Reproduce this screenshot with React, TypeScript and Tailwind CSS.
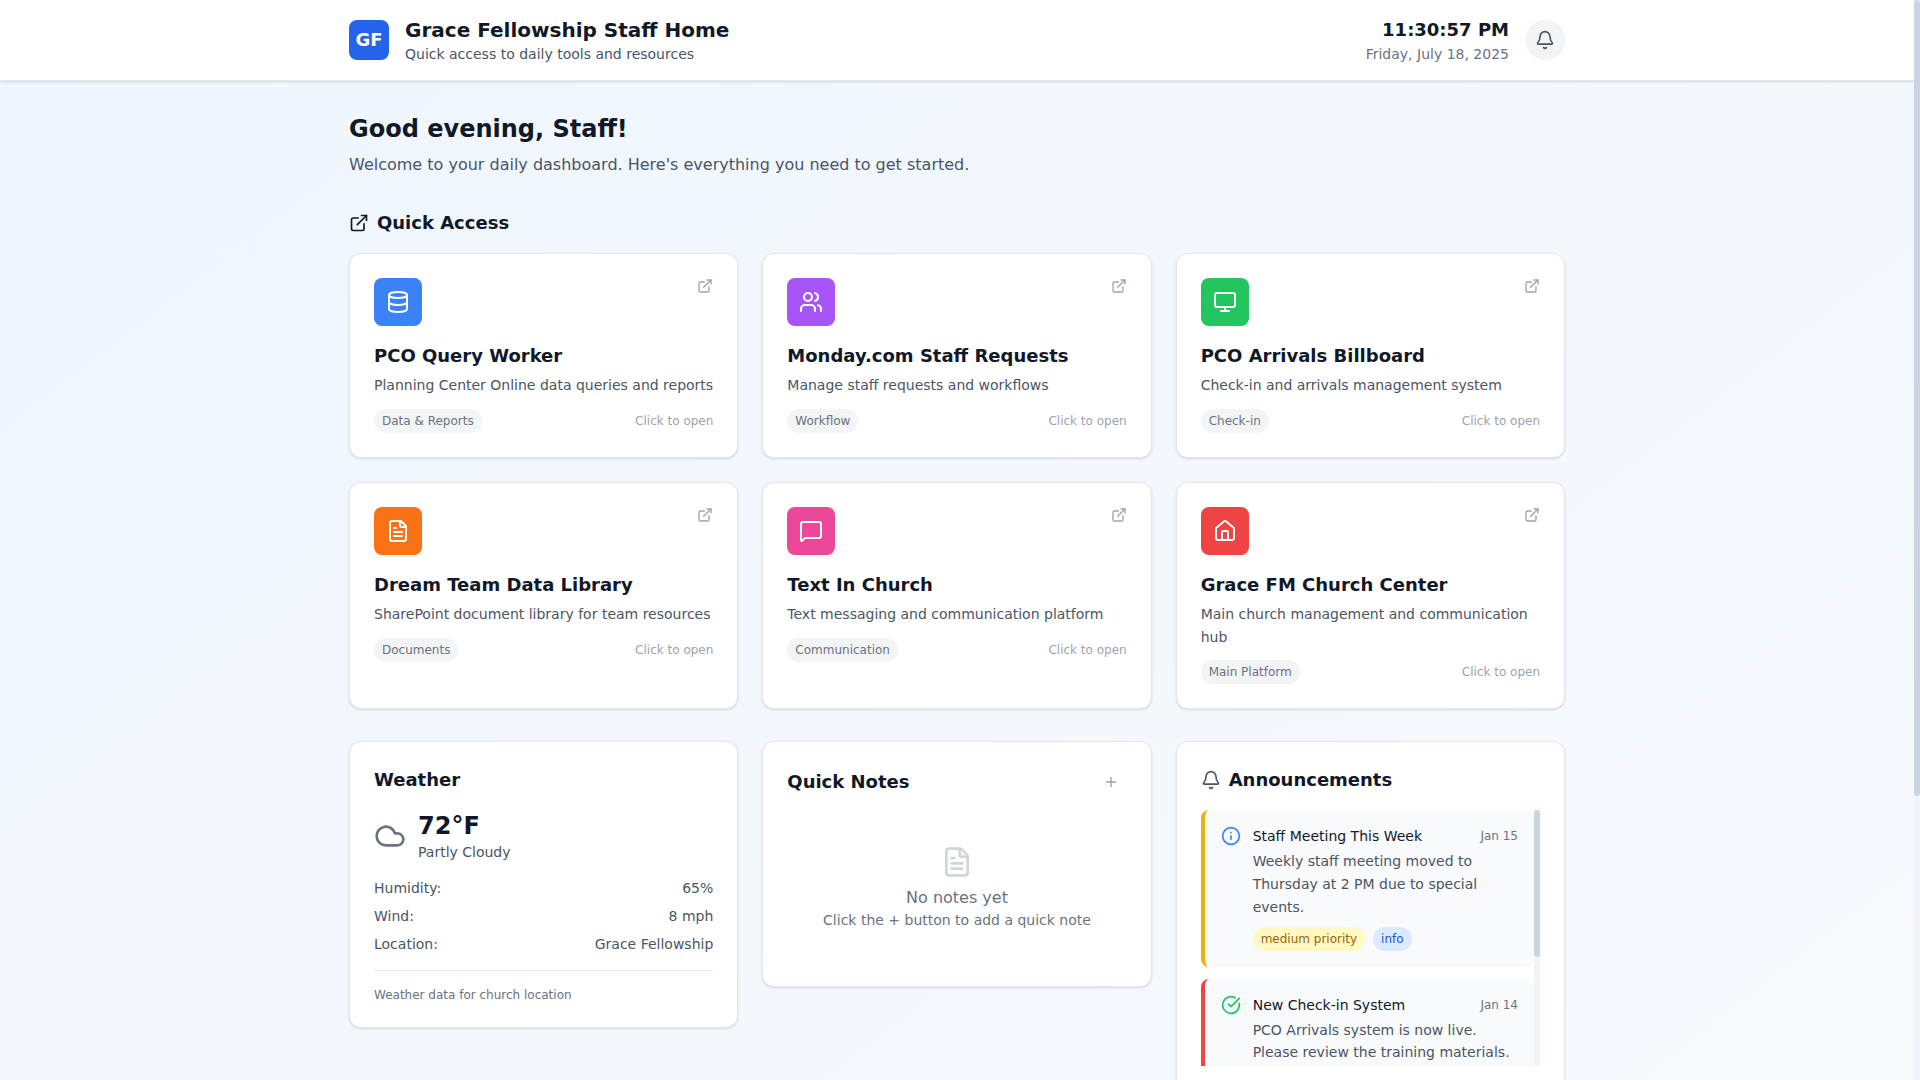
import { Bell, CircleCheckBig, Cloud, Database, ExternalLink, FileText, Home, Info, MessageSquare, Monitor, Plus, Users } from 'lucide-react';
import type { ComponentType, ReactNode } from 'react';

type Tool = {
  title: string;
  description: string;
  tag: string;
  icon: ComponentType<{ className?: string }>;
  color: string;
};

const tools: Tool[] = [
  { title: 'PCO Query Worker', description: 'Planning Center Online data queries and reports', tag: 'Data & Reports', icon: Database, color: 'bg-[#3b82f6]' },
  { title: 'Monday.com Staff Requests', description: 'Manage staff requests and workflows', tag: 'Workflow', icon: Users, color: 'bg-[#a855f7]' },
  { title: 'PCO Arrivals Billboard', description: 'Check-in and arrivals management system', tag: 'Check-in', icon: Monitor, color: 'bg-[#22c55e]' },
  { title: 'Dream Team Data Library', description: 'SharePoint document library for team resources', tag: 'Documents', icon: FileText, color: 'bg-[#f97316]' },
  { title: 'Text In Church', description: 'Text messaging and communication platform', tag: 'Communication', icon: MessageSquare, color: 'bg-[#ec4899]' },
  { title: 'Grace FM Church Center', description: 'Main church management and communication hub', tag: 'Main Platform', icon: Home, color: 'bg-[#ef4444]' },
];

const card = 'bg-white rounded-xl border border-[#e5e7eb] shadow-sm p-6';

function ToolCard({ tool }: { tool: Tool }) {
  const Icon = tool.icon;
  return (
    <div className={card}>
      <div className="flex items-start justify-between mb-4">
        <div className={`w-12 h-12 rounded-lg flex items-center justify-center ${tool.color}`}>
          <Icon className="w-6 h-6 text-white" />
        </div>
        <ExternalLink className="w-4 h-4 text-[#9ca3af]" />
      </div>
      <h3 className="text-lg font-semibold text-[#111827] mb-1">{tool.title}</h3>
      <p className="text-sm leading-relaxed text-[#4b5563] mb-3">{tool.description}</p>
      <div className="flex items-center justify-between">
        <span className="text-xs px-2 py-1 rounded-full bg-[#f3f4f6] text-[#6b7280]">{tool.tag}</span>
        <span className="text-xs text-[#9ca3af]">Click to open</span>
      </div>
    </div>
  );
}

function WeatherRow({ label, value }: { label: string; value: string }) {
  return (
    <div className="flex justify-between text-sm text-[#4b5563]">
      <span>{label}</span>
      <span>{value}</span>
    </div>
  );
}

function Announcement({ title, date, body, border, icon, tags }: {
  title: string;
  date: string;
  body: string;
  border: string;
  icon: ReactNode;
  tags?: ReactNode;
}) {
  return (
    <div className={`bg-[#f9fafb] rounded-lg border-l-4 p-4 ${border}`}>
      <div className="flex items-start gap-3">
        {icon}
        <div className="flex-1 min-w-0">
          <div className="flex items-center justify-between mb-1">
            <h4 className="text-sm font-medium text-[#111827]">{title}</h4>
            <span className="text-xs text-[#6b7280]">{date}</span>
          </div>
          <p className="text-sm leading-relaxed text-[#4b5563]">{body}</p>
          {tags && <div className="flex items-center gap-2 mt-2">{tags}</div>}
        </div>
      </div>
    </div>
  );
}

export default function App() {
  return (
    <div className="flex h-screen overflow-hidden font-['DejaVu_Sans',sans-serif]">
      <div className="flex-1 min-w-0 overflow-hidden">
        <div className="min-h-[1465px] bg-gradient-to-br from-[#eff6ff] to-[#f9fafb]">
          <header className="bg-white border-b border-[#e5e7eb] shadow-sm">
            <div className="max-w-7xl mx-auto px-8 py-4 flex items-center justify-between">
              <div className="flex items-center gap-4">
                <div className="w-10 h-10 rounded-lg bg-[#2563eb] flex items-center justify-center text-white font-bold text-lg">GF</div>
                <div>
                  <h1 className="text-xl font-bold text-[#111827]">Grace Fellowship Staff Home</h1>
                  <p className="text-sm text-[#4b5563]">Quick access to daily tools and resources</p>
                </div>
              </div>
              <div className="flex items-center gap-4">
                <div className="text-right">
                  <div className="text-lg font-bold leading-7 text-[#111827]">11:30:57 PM</div>
                  <div className="text-sm text-[#6b7280]">Friday, July 18, 2025</div>
                </div>
                <button className="w-10 h-10 rounded-full bg-[#f3f4f6] flex items-center justify-center">
                  <Bell className="w-5 h-5 text-[#4b5563]" />
                </button>
              </div>
            </div>
          </header>

          <main className="max-w-7xl mx-auto px-8 py-8">
            <h2 className="text-2xl font-bold text-[#111827] mb-2">Good evening, Staff!</h2>
            <p className="text-base text-[#4b5563] mb-8">Welcome to your daily dashboard. Here's everything you need to get started.</p>

            <div className="flex items-center gap-2 mb-4">
              <ExternalLink className="w-5 h-5 text-[#111827]" />
              <h2 className="text-lg font-semibold text-[#111827]">Quick Access</h2>
            </div>

            <div className="grid grid-cols-3 gap-6 mb-8">
              {tools.map((tool) => (
                <ToolCard key={tool.title} tool={tool} />
              ))}
            </div>

            <div className="grid grid-cols-3 gap-6 items-start">
              <div className={card}>
                <h3 className="text-lg font-semibold text-[#111827] mb-4">Weather</h3>
                <div className="flex items-center gap-3 mb-4">
                  <Cloud className="w-8 h-8 text-[#6b7280]" />
                  <div>
                    <div className="text-2xl font-bold text-[#111827]">72°F</div>
                    <div className="text-sm text-[#4b5563]">Partly Cloudy</div>
                  </div>
                </div>
                <div className="flex flex-col gap-2">
                  <WeatherRow label="Humidity:" value="65%" />
                  <WeatherRow label="Wind:" value="8 mph" />
                  <WeatherRow label="Location:" value="Grace Fellowship" />
                </div>
                <div className="mt-4 pt-4 border-t border-[#e5e7eb] text-xs text-[#6b7280]">Weather data for church location</div>
              </div>

              <div className={card}>
                <div className="flex items-center justify-between mb-4">
                  <h3 className="text-lg font-semibold text-[#111827]">Quick Notes</h3>
                  <button className="p-2 text-[#9ca3af]">
                    <Plus className="w-4 h-4" />
                  </button>
                </div>
                <div className="py-8 text-center">
                  <FileText className="w-8 h-8 mx-auto mb-2 text-[#d1d5db]" />
                  <p className="text-base text-[#6b7280]">No notes yet</p>
                  <p className="text-sm text-[#6b7280]">Click the + button to add a quick note</p>
                </div>
              </div>

              <div className={card}>
                <div className="flex items-center gap-2 mb-4">
                  <Bell className="w-5 h-5 text-[#4b5563]" />
                  <h3 className="text-lg font-semibold text-[#111827]">Announcements</h3>
                </div>
                <div className="flex h-64 overflow-hidden">
                  <div className="flex-1 min-w-0 flex flex-col gap-3">
                    <Announcement
                      title="Staff Meeting This Week"
                      date="Jan 15"
                      body="Weekly staff meeting moved to Thursday at 2 PM due to special events."
                      border="border-[#eab308]"
                      icon={<Info className="w-5 h-5 text-[#3b82f6] shrink-0" />}
                      tags={
                        <>
                          <span className="text-xs px-2 py-1 rounded-full bg-[#fef9c3] text-[#a16207]">medium priority</span>
                          <span className="text-xs px-2 py-1 rounded-full bg-[#dbeafe] text-[#1d4ed8]">info</span>
                        </>
                      }
                    />
                    <Announcement
                      title="New Check-in System"
                      date="Jan 14"
                      body="PCO Arrivals system is now live. Please review the training materials."
                      border="border-[#ef4444]"
                      icon={<CircleCheckBig className="w-5 h-5 text-[#22c55e] shrink-0" />}
                    />
                  </div>
                  {/* scrollbar of the list */}
                  <div className="w-1.5 bg-[#f1f5f9]">
                    <div className="h-[147px] rounded-full bg-[#cbd5e1]" />
                  </div>
                </div>
              </div>
            </div>
          </main>
        </div>
      </div>
      {/* scrollbar of the page */}
      <div className="w-1.5 bg-[#f1f5f9]">
        <div className="h-[796px] rounded-full bg-[#cbd5e1]" />
      </div>
    </div>
  );
}
